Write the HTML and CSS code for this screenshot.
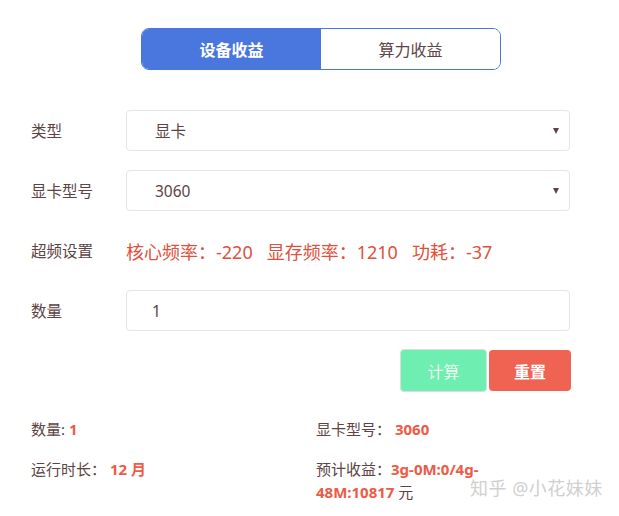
FILE: index.html
```html
<!DOCTYPE html>
<html lang="zh">
<head>
<meta charset="utf-8">
<link rel="stylesheet" href="styles.css">
</head>
<body>
<div class="page">
  <div class="tabs">
    <div class="tab active">设备收益</div>
    <div class="tab">算力收益</div>
  </div>
  <div class="form">
    <div class="row">
      <div class="label">类型</div>
      <div class="field select"><span>显卡</span><span class="arrow"></span></div>
    </div>
    <div class="row">
      <div class="label">显卡型号</div>
      <div class="field select"><span>3060</span><span class="arrow"></span></div>
    </div>
    <div class="row">
      <div class="label">超频设置</div>
      <div class="oc">核心频率：-220&nbsp;&nbsp;&nbsp;显存频率：1210&nbsp;&nbsp;&nbsp;功耗：-37</div>
    </div>
    <div class="row">
      <div class="label">数量</div>
      <div class="field input"><span>1</span></div>
    </div>
  </div>
  <div class="buttons">
    <div class="btn calc">计算</div>
    <div class="btn reset">重置</div>
  </div>
  <div class="results">
    <div class="res">数量: <b>1</b></div>
    <div class="res">显卡型号： <b>3060</b></div>
    <div class="res">运行时长： <b>12 月</b></div>
    <div class="res">预计收益：<b>3g-0M:0/4g-48M:10817</b> 元</div>
  </div>
  <div class="watermark">知乎 @小花妹妹</div>
</div>
</body>
</html>
```
FILE: styles.css
```css
* { box-sizing: border-box; }
body {
  margin: 0;
  background: #fff;
  font-family: "Noto Sans", "Noto Sans CJK SC", sans-serif;
  color: #5c4444;
}
.page {
  position: relative;
  width: 619px;
  height: 516px;
  padding-top: 28px;
}
.tabs {
  display: flex;
  margin-left: 141px;
  width: 360px;
  height: 42px;
  border: 1px solid #4a77dd;
  border-radius: 8px;
  overflow: hidden;
}
.tab {
  flex: 1;
  display: flex;
  align-items: center;
  justify-content: center;
  font-size: 16px;
  color: #5c4444;
  background: #fff;
}
.tab.active {
  background: #4a77dd;
  color: #fff;
  font-weight: bold;
}
.form {
  margin-top: 40px;
  padding-left: 31px;
  padding-right: 49px;
  display: flex;
  flex-direction: column;
  gap: 19px;
}
.row {
  display: flex;
  align-items: center;
  height: 41px;
}
.label {
  width: 95px;
  font-size: 15.5px;
  flex: none;
}
.field {
  flex: 1;
  height: 41px;
  border: 1px solid #e3e5e8;
  border-radius: 4px;
  display: flex;
  align-items: center;
  padding-left: 28px;
  padding-right: 10px;
  font-size: 15.5px;
  color: #5c4444;
}
.input { padding-left: 25px; }
.select { justify-content: space-between; }
.arrow {
  width: 0;
  height: 0;
  border-left: 3.5px solid transparent;
  border-right: 3.5px solid transparent;
  border-top: 6px solid #5c4444;
}
.oc {
  font-size: 18px;
  color: #e0503c;
}
.buttons {
  display: flex;
  justify-content: flex-end;
  align-items: center;
  gap: 2px;
  padding-right: 48px;
  margin-top: 18px;
}
.btn {
  height: 41px;
  display: flex;
  align-items: center;
  justify-content: center;
  font-size: 16px;
  color: #fff;
  border-radius: 4px;
}
.calc {
  width: 87px;
  height: 43px;
  background: #6eeeb0;
  border: 1px solid #d8e0dc;
  color: #eef8f2;
}
.reset {
  width: 82px;
  background: #f06352;
  font-weight: bold;
}
.results {
  display: grid;
  grid-template-columns: 285px 230px;
  padding-left: 31px;
  margin-top: 26px;
  row-gap: 17px;
  font-size: 15px;
  line-height: 23px;
}
.res b { color: #ee5a45; }
.watermark {
  position: absolute;
  left: 470px;
  top: 474px;
  font-size: 18px;
  color: #d0d0d0;
  letter-spacing: 0.5px;
  text-shadow: 0 0 1px #fff;
}
```
